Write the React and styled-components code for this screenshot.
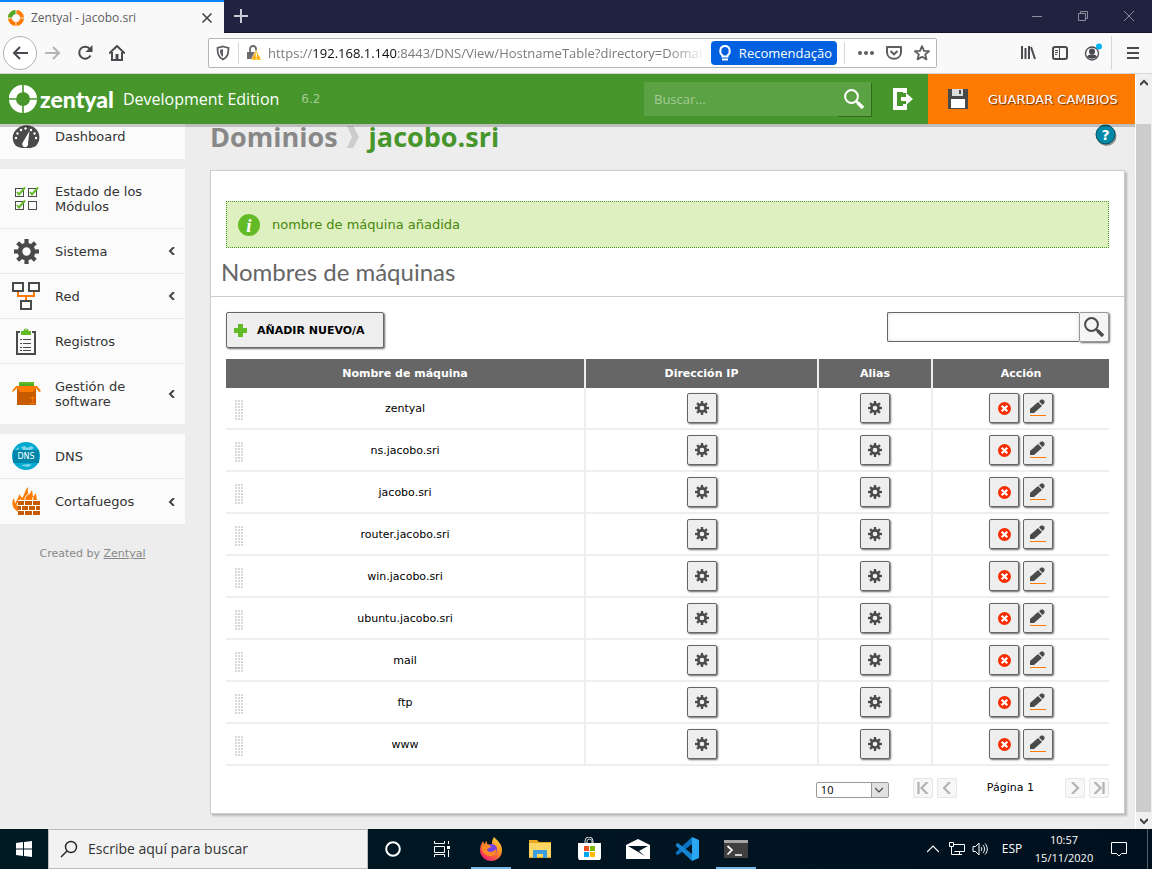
import React from "react";
import styled, { createGlobalStyle, css } from "styled-components";

const verdana = `"DejaVu Sans", Verdana, sans-serif`;
const segoe = `"Open Sans", "Segoe UI", sans-serif`;

const GlobalStyle = createGlobalStyle`
  *, *::before, *::after { box-sizing: border-box; }
  body { margin: 0; font-family: ${verdana}; color: #000; }
  button, input, select { font: inherit; color: inherit; margin: 0; }
  button { padding: 0; border: 0; background: none; cursor: pointer; }
  svg { display: block; flex: none; }
`;

const Desktop = styled.div`
  display: flex;
  flex-direction: column;
  min-height: 100vh;
  background: #ededed;
`;

/* Browser chrome */

const TabStrip = styled.div`
  display: flex;
  height: 33px;
  background: #20233f;
  border-bottom: 1px solid #14162c;
  font-family: ${segoe};
`;

const Tab = styled.div`
  display: flex;
  align-items: center;
  gap: 7px;
  width: 224px;
  height: 33px;
  padding: 0 10px 0 8px;
  background: #f9f9fa;
  border-top: 2px solid #0a84ff;
  font-size: 12px;
  color: #5c5c61;
`;

const TabTitle = styled.span`
  flex: 1;
  white-space: nowrap;
`;

const StripButton = styled.button`
  display: grid;
  place-items: center;
  width: ${(p) => p.$width || 34}px;
`;

const Spacer = styled.div`
  flex: 1;
`;

const NavBar = styled.div`
  display: flex;
  align-items: center;
  height: 41px;
  background: #f9f9fa;
  border-bottom: 1px solid #d6d6d8;
  font-family: ${segoe};
`;

const NavButtons = styled.nav`
  display: flex;
  align-items: center;
  width: 208px;
  padding-left: 3px;
`;

const NavButton = styled.button`
  display: grid;
  place-items: center;
  width: 32px;
  height: 32px;
`;

const BackButton = styled(NavButton)`
  width: 34px;
  height: 34px;
  border: 1px solid #b1b1b3;
  border-radius: 50%;
  background: #fff;
`;

const AddressBar = styled.div`
  display: flex;
  align-items: center;
  flex: 1;
  min-width: 0;
  height: 30px;
  padding-left: 6px;
  background: #fff;
  border: 1px solid #b5b5b7;
  border-radius: 2px;
`;

const Divider = styled.span`
  width: 1px;
  height: 22px;
  margin: 0 7px;
  background: #d7d7db;
`;

const ToolDivider = styled(Divider)`
  height: 34px;
  margin: 0 5px 0 3px;
`;

const Url = styled.div`
  flex: 1;
  min-width: 0;
  margin-left: 6px;
  overflow: hidden;
  white-space: nowrap;
  font-size: 13px;
  line-height: 20px;
  color: #7b7b7d;
  mask-image: linear-gradient(to left, transparent 0, #000 40px);

  b {
    font-weight: 400;
    color: #0c0c0d;
  }
`;

const Recommendation = styled.button`
  display: flex;
  align-items: center;
  gap: 5px;
  height: 24px;
  margin-left: 4px;
  padding: 0 5px;
  border-radius: 4px;
  background: #0060df;
  color: #fff;
  font-size: 13px;
`;

const BarIcon = styled.button`
  display: grid;
  place-items: center;
  width: 28px;
  height: 28px;
`;

const BrowserTools = styled.div`
  display: flex;
  align-items: center;
  justify-content: flex-end;
  width: 215px;
  padding-right: 3px;
`;

/* Web page */

const Viewport = styled.div`
  display: flex;
  flex: 1;
`;

const Page = styled.div`
  display: flex;
  flex: 1;
  flex-direction: column;
  min-width: 0;
`;

const Header = styled.header`
  position: relative;
  z-index: 1;
  display: flex;
  align-items: center;
  height: 50px;
  padding-left: 9px;
  background: #46962b;
  box-shadow: 0 3px 0 rgba(0, 0, 0, 0.2);
  color: #fff;
`;

const Brand = styled.a`
  display: flex;
  align-items: center;
  gap: 3px;
  color: #fff;
  text-decoration: none;
  font: 900 23px/28px Lato, sans-serif;
`;

const Edition = styled.span`
  margin-left: 9px;
  font: 16px/24px ${segoe};
`;

const Version = styled.span`
  margin-left: 22px;
  font-size: 12px;
  color: #a3cb95;
`;

const HeaderSearch = styled.form`
  display: flex;
  width: 227px;
  height: 34px;
  background: #5ba245;

  input {
    flex: 1;
    min-width: 0;
    padding: 0 10px;
    border: 0;
    background: none;
    font: 13px ${segoe};
    outline: 0;
  }
  input::placeholder {
    color: #a3cb95;
    opacity: 1;
  }
  button {
    display: grid;
    place-items: center;
    width: 34px;
    box-shadow: 1px 1px 0 #2f6a1b;
  }
`;

const Logout = styled.button`
  display: grid;
  place-items: center;
  width: 57px;
  height: 50px;
  padding-left: 6px;
`;

const SaveButton = styled.button`
  display: flex;
  align-items: center;
  gap: 20px;
  width: 207px;
  height: 50px;
  padding-left: 20px;
  background: #ff7a00;
  font-size: 13px;
  text-transform: uppercase;
  white-space: nowrap;
  text-shadow: 1px 1px 1px rgba(0, 0, 0, 0.6);
`;

const Scroller = styled.div`
  display: flex;
  flex: 1;
  background: #ededed;
`;

const Sidebar = styled.aside`
  flex: none;
  width: 185px;
  margin-top: -10px;
`;

const Menu = styled.ul`
  margin: 0 0 10px;
  padding: 0;
  list-style: none;
  background: #fbfbfb;
`;

const MenuItem = styled.li`
  display: grid;
  min-height: ${(p) => (p.$tall ? 60 : 45)}px;

  &:not(:last-child) {
    border-bottom: 1px solid #e8e8e8;
  }
`;

const MenuLink = styled.a`
  display: grid;
  grid-template-columns: 30px 1fr 8px;
  align-items: center;
  column-gap: 14px;
  padding: 0 9px 0 11px;
  color: #333;
  font-size: 13px;
  line-height: 15px;
  text-decoration: none;
`;

const MenuIcon = styled.span`
  display: grid;
  place-items: center;
`;

const Credits = styled.p`
  margin: 22px 0 0;
  text-align: center;
  font-size: 11px;
  line-height: 16px;
  color: #888;

  a {
    color: inherit;
  }
`;

const Main = styled.main`
  flex: 1;
  min-width: 0;
  padding: 0 10px 15px 25px;
`;

const TitleRow = styled.div`
  display: flex;
  align-items: flex-start;
  justify-content: space-between;
  height: 26px;
  margin-bottom: 20px;
  padding-right: 8px;
`;

const Title = styled.h1`
  display: flex;
  align-items: center;
  gap: 8px;
  margin: 0;
  font: 700 27px/26px ${segoe};
  color: #46962b;

  a {
    color: #888;
    text-decoration: none;
  }
`;

const Panel = styled.section`
  padding: 30px 15px 15px;
  background: #fff;
  border: 1px solid #ccc;
  box-shadow: 2px 2px 2px rgba(0, 0, 0, 0.22);
`;

const Notice = styled.div`
  display: flex;
  align-items: center;
  gap: 12px;
  height: 47px;
  padding: 0 11px;
  background: #dff0c0;
  border: 1px dotted #46962b;
  color: #46870c;
  font-size: 13px;
`;

const SectionTitle = styled.h2`
  margin: 0 -15px 15px;
  padding: 8px 10px 8px;
  border-bottom: 1px solid #ccc;
  font: 400 24px/32px Lato, sans-serif;
  color: #666;
`;

const Toolbar = styled.div`
  display: flex;
  justify-content: space-between;
  align-items: flex-start;
  margin-bottom: 11px;
`;

const raised = css`
  border: 1px solid #666;
  border-radius: 2px;
  background: #eee;
  box-shadow: 1px 1px 2px rgba(0, 0, 0, 0.6);
`;

const AddButton = styled.button`
  ${raised}
  display: flex;
  align-items: center;
  gap: 10px;
  height: 36px;
  padding: 0 18px 0 7px;
  font-size: 11px;
  font-weight: 700;
  text-transform: uppercase;
`;

const TableSearch = styled.form`
  display: flex;

  input {
    width: 192px;
    height: 30px;
    padding: 0 6px;
    border: 1px solid #666;
    border-right: 0;
    border-radius: 2px 0 0 2px;
    background: #fff;
    box-shadow: inset 0 0 4px rgba(0, 0, 0, 0.12);
    font-size: 13px;
  }
  button {
    ${raised}
    display: grid;
    place-items: center;
    width: 30px;
    height: 30px;
    border-color: #999;
    background: #f5f5f5;
  }
`;

const HostTable = styled.table`
  width: 100%;
  table-layout: fixed;
  border-collapse: separate;
  border-spacing: 0;
  font-size: 11px;
  text-align: center;

  th {
    height: 29px;
    padding: 0;
    background: #666;
    color: #fff;
    font-weight: 700;
  }
  td {
    height: 42px;
    padding: 0;
    border-bottom: 2px solid #eee;
  }
  th:not(:last-child),
  td:not(:last-child) {
    border-right: 2px solid #eee;
  }
`;

const AddressColumn = styled.col`
  width: 233px;
`;
const AliasColumn = styled.col`
  width: 114px;
`;
const ActionColumn = styled.col`
  width: 176px;
`;

const HostName = styled.div`
  display: grid;
  grid-template-columns: 24px 1fr 24px;
  align-items: center;
`;

const Grip = styled.span`
  width: 9px;
  height: 21px;
  margin: 3px 0 0 9px;
  background:
    repeating-linear-gradient(#fff 0 1px, transparent 1px 3px),
    repeating-linear-gradient(90deg, #d8d8d8 0 2px, #fff 2px 3px);
`;

const Actions = styled.div`
  display: flex;
  justify-content: center;
  gap: 4px;
`;

const IconButton = styled.button`
  ${raised}
  display: grid;
  place-items: center;
  width: 30px;
  height: 30px;
`;

const Pager = styled.div`
  display: flex;
  justify-content: flex-end;
  align-items: center;
  gap: 4px;
  margin-top: 12px;
  font-size: 11px;
`;

const PageSize = styled.label`
  display: grid;
  grid-template-columns: 1fr 18px;
  align-self: flex-end;
  width: 73px;
  height: 16px;
  margin-right: 20px;
  border: 1px solid #999;
  border-radius: 2px;
  background: linear-gradient(90deg, #fff 54px, #999 54px 55px, #e1e1e1 55px);

  select {
    grid-area: 1 / 1 / 2 / 3;
    padding: 0 4px;
    border: 0;
    background: none;
    appearance: none;
    font: 11px/14px ${segoe};
  }
  svg {
    grid-area: 1 / 2;
    place-self: center;
    pointer-events: none;
  }
`;

const PageButton = styled.button`
  display: grid;
  place-items: center;
  width: 20px;
  height: 20px;
  background: #f7f7f7;
  border: 1px solid #e6e6e6;
  border-radius: 2px;
`;

const PageLabel = styled.span`
  padding: 0 27px 2px 26px;
`;

const ScrollBar = styled.div`
  display: flex;
  flex-direction: column;
  width: 17px;
  background: #f0f0f0;
  border-left: 1px solid #fff;
`;

const ScrollArrow = styled.button`
  display: grid;
  place-items: center;
  height: 17px;
`;

const ScrollThumb = styled.div`
  flex: 1;
  margin: 33px 1px 0 0;
  background: #cdcdcd;
`;

/* Windows taskbar */

const TaskBar = styled.footer`
  display: flex;
  height: 40px;
  background: linear-gradient(90deg, #001a24, #00101f);
  color: #fff;
  font: 12px/18px ${segoe};
`;

const TaskButton = styled.button`
  display: grid;
  place-items: center;
  width: ${(p) => p.$width || 49}px;
  ${(p) =>
    p.$open &&
    css`
      background: linear-gradient(#76b9ed, #76b9ed) center bottom / 40px 2px no-repeat;
    `}
`;

const TaskSearch = styled.label`
  display: flex;
  align-items: center;
  gap: 10px;
  width: 320px;
  padding: 0 11px;
  background: #f2f2f2;
  border: 1px solid #bcbcbc;

  input {
    flex: 1;
    min-width: 0;
    padding: 0;
    border: 0;
    background: none;
    font-size: 14px;
  }
  input::placeholder {
    color: #333;
    opacity: 1;
  }
`;

const Clock = styled.button`
  width: 66px;
  text-align: center;
  font-size: 11px;
  line-height: 18px;
`;

const Notifications = styled(TaskButton)`
  padding-right: 6px;
`;

const ShowDesktop = styled.button`
  width: 5px;
  border-left: 1px solid #53606a;
`;

/* Drawings */

const Svg = ({ w = 16, h = w, box, children, ...rest }) => (
  <svg width={w} height={h} viewBox={box || `0 0 ${w} ${h}`} fill="none" aria-hidden="true" {...rest}>
    {children}
  </svg>
);

const Ring = ({ size, color = "#fff", accent = color, gap = "#46962b" }) => (
  <Svg w={size} box="0 0 28 28">
    <circle cx="14" cy="14" r="10.5" stroke={color} strokeWidth="7" />
    <path d="M3.5 14A10.5 10.5 0 0 1 14 3.5" stroke={accent} strokeWidth="7" />
    <path d="M14 0v8M14 20v8M0 14h8M20 14h8" stroke={gap} strokeWidth="1.6" />
  </Svg>
);

const Gear = ({ size, hole = 4 }) => (
  <Svg w={size} box="0 0 24 24">
    <circle cx="12" cy="12" r={(hole + 8.5) / 2} stroke="#4a4a49" strokeWidth={8.5 - hole} />
    {[0, 45, 90, 135, 180, 225, 270, 315].map((a) => (
      <rect key={a} x="10" y="0" width="4" height="5" fill="#4a4a49" transform={`rotate(${a} 12 12)`} />
    ))}
  </Svg>
);

const Lens = ({ size, color }) => (
  <Svg w={size} box="0 0 20 20">
    <circle cx="7.5" cy="7.5" r="6.4" stroke={color} strokeWidth="2" />
    <path d="M12 12l2 2" stroke={color} strokeWidth="2" />
    <path d="M13.500 13.500l5.500 5.500" stroke={color} strokeWidth="3.4" />
  </Svg>
);

const Chevron = ({ d, w = 8, h = 8, color = "#444", width = 2 }) => (
  <Svg w={w} h={h} box="0 0 8 8">
    <path d={d} stroke={color} strokeWidth={width} />
  </Svg>
);

const DashboardIcon = () => (
  <Svg w={28} h={24}>
    <path d="M4 21C-1 15 0 8 5 4c5-5 14-5 19 0 4 4 5 11 0 17-2 1-4 1.500-5 2h-9c-2-.5-4-1-6-2z" fill="#4a4a49" />
    {[[4, 13], [5.500, 8.500], [9, 5], [13.500, 3.500], [22.500, 8.500], [24, 13], [19, 5]].map(([x, y]) => (
      <circle key={x} cx={x} cy={y} r="1.200" fill="#fff" />
    ))}
    <path d="M17.500 6l-1.500 12a3 3 0 1 1-5-1z" fill="#fff" />
  </Svg>
);

const ModulesIcon = () => (
  <Svg w={26} h={25}>
    {[[2, 2], [15, 2], [2, 15], [15, 15]].map(([x, y], i) => (
      <g key={i}>
        <rect x={x + 0.5} y={y + 0.5} width="8" height="8" stroke="#4a4a49" />
        {i < 3 && <path d={`M${x + 2} ${y + 4}l2 2.5 6-7`} stroke="#62bb26" strokeWidth="2" />}
      </g>
    ))}
  </Svg>
);

const NetworkIcon = () => (
  <Svg w={28} h={28}>
    <path d="M6 9v5h16V9M14 14v5" stroke="#ff7a00" strokeWidth="2" />
    <path d="M1 1h10v8H1zM17 1h10v8H17zM9 19h10v8H9z" stroke="#4a4a49" strokeWidth="2" />
  </Svg>
);

const LogsIcon = () => (
  <Svg w={22} h={28}>
    <path d="M5 5H2v22h18V5h-3" stroke="#4a4a49" strokeWidth="2" />
    <path d="M6 8V4h2.500a2.500 2.500 0 0 1 5 0H16v4z" fill="#62bb26" />
    <path d="M10.500 2h1v1h-1z" fill="#fff" />
    <path d="M5 12.500h2M5 16.500h2M5 20.500h2M5 23.500h2M8 12.500h8M8 16.500h8M8 20.500h8M8 23.500h8" stroke="#4a4a49" />
  </Svg>
);

const SoftwareIcon = () => (
  <Svg w={30} h={26}>
    <path d="M8 1h15v6H8z" fill="#62bb26" />
    <path d="M8 3h15v4H8z" fill="#4faa2a" />
    <path d="M6 7h19v17H6z" fill="#c75b00" />
    <path d="M5 5h21l4 5-2 1-3-4-3 4H9L6 7l-4 4-1-1z" fill="#ff7a00" />
    <path d="M21.500 21v-5M19 18l2.500-2.500 2.500 2.500M19 22.500h5" stroke="#ff7a00" />
  </Svg>
);

const DnsIcon = () => (
  <Svg w={28}>
    <circle cx="14" cy="14" r="14" fill="#00a9cf" />
    <path d="M9 5l4-1 2 2 4-2 3 2-5 3-6-1zM9 23l8-1 3 1-4 2-5-1zM3 8l4-3-1 4z" fill="#7dd5ea" />
    <path d="M1 8h26v13H1z" fill="#0086a8" />
    <text x="14" y="17" textAnchor="middle" fill="#fff" fontSize="8" fontWeight="400" fontFamily="DejaVu Sans, sans-serif">DNS</text>
  </Svg>
);

const FirewallIcon = () => (
  <Svg w={30} h={31}>
    <path d="M7 26C1 22 0 16 3 12l1 6c1-4 4-5 4-10l3 4c3-3 2-7 6-11 0 3-1 5 1 8l3-5 1 7 3-4c0 4 2 7 0 11z" fill="#ff7a00" />
    <path d="M10 13c-2 3-4 4-4 7M17 8c-3 3-4 5-3 8M22 11l-1 5" stroke="#fff" />
    <path d="M7 14h22v16H7z" fill="#fff" />
    {[15, 20, 25].map((y, i) => (
      <path key={y} d={i % 2 ? `M7 ${y}h3v4H7zM11 ${y}h6v4h-6zM18 ${y}h6v4h-6zM25 ${y}h4v4h-4z` : `M7 ${y}h6v4H7zM14 ${y}h7v4h-7zM22 ${y}h7v4h-7z`} fill="#c75b00" />
    ))}
  </Svg>
);

const InfoIcon = () => (
  <Svg w={22}>
    <circle cx="11" cy="11" r="11" fill="#62bb26" />
    <text x="11" y="18" textAnchor="middle" fill="#fff" fontSize="19" fontWeight="700" fontStyle="italic" fontFamily="Liberation Serif, serif">i</text>
  </Svg>
);

const HelpIcon = () => (
  <Svg w={22}>
    <circle cx="11.500" cy="12" r="10" fill="#000" opacity=".4" />
    <circle cx="10.500" cy="10.500" r="9.500" fill="#0089a7" stroke="#04505f" />
    <text x="10.500" y="15.500" textAnchor="middle" fill="#fff" fontSize="14" fontWeight="700" fontFamily="DejaVu Sans, sans-serif">?</text>
  </Svg>
);

const DeleteIcon = () => (
  <Svg w={14}>
    <circle cx="7.500" cy="7.500" r="6.500" fill="#fa2c00" />
    <path d="M4.700 4.700l5.600 5.600M10.300 4.700l-5.600 5.600" stroke="#fff" strokeWidth="2.200" />
  </Svg>
);

const EditIcon = () => (
  <Svg w={18}>
    <path d="M1 14v-4l8-7 4 4-8 7z" fill="#4a4a49" />
    <path d="M10 2.300L12 .5h2l1.500 1.500v2L13.500 6z" fill="#4a4a49" />
    <path d="M1 16.500h16" stroke="#ff7a00" />
  </Svg>
);

const FirefoxIcon = () => (
  <Svg w={24}>
    <defs>
      <linearGradient id="fox" x1="1" y1="0" x2="0.300" y2="1">
        <stop offset="0" stopColor="#ffe24a" />
        <stop offset=".45" stopColor="#ff9422" />
        <stop offset="1" stopColor="#f5206a" />
      </linearGradient>
    </defs>
    <path d="M15 0c3 3 8 7 8 13 0 7-5 11-11 11S1 19 1 13c0-3 1-6 3-9l1 3 3-3v3l5 1c0-3 0-5 2-8z" fill="url(#fox)" />
    <circle cx="12.500" cy="12.500" r="5.500" fill="#7542e5" />
    <path d="M3 9c4-3 7-1 10 1-3 0-3 2-5 2 0 4 6 4 9 0 1 5-3 8-7 7-5-1-8-5-7-10z" fill="#ff8a25" />
  </Svg>
);

const ExplorerIcon = () => (
  <Svg w={22} h={20}>
    <path d="M0 1h8l2 2h12v16H0z" fill="#e9a820" />
    <path d="M0 4h22v14H0z" fill="#ffd766" />
    <path d="M4 19v-8h14v8h-4v-4H8v4z" fill="#3c9ee0" />
  </Svg>
);

const StoreIcon = () => (
  <Svg w={24}>
    <path d="M8 6V4a4 4 0 0 1 8 0v2M10 6V3.500a3 3 0 0 1 5 0V6" stroke="#ddd" />
    <path d="M1 6h23v15l-1 2H2l-1-2z" fill="#fff" />
    <path d="M7 9h5v5H7z" fill="#f25022" />
    <path d="M13 9h5v5h-5z" fill="#7fba00" />
    <path d="M7 15h5v5H7z" fill="#00a4ef" />
    <path d="M13 15h5v5h-5z" fill="#ffb900" />
  </Svg>
);

const MailIcon = () => (
  <Svg w={24} h={20}>
    <path d="M0 6l12-6 12 6v14H0z" fill="#fff" />
    <path d="M2 7h20l-9 5 6 5L2 7z" fill="#001523" />
  </Svg>
);

const CodeIcon = () => (
  <Svg w={24}>
    <path d="M17 0l7 3v18l-7 3z" fill="#2aa7f2" />
    <path d="M1 15L17 0v7L3 18l-2-1z" fill="#0a72c0" />
    <path d="M1 7l2-1 14 11v7L1 9z" fill="#1685d2" />
  </Svg>
);

const TerminalIcon = () => (
  <Svg w={24} h={18}>
    <path d="M0 0h24v18H0z" fill="#3f3f3f" />
    <path d="M0 0h24v3H0z" fill="#a5a5a5" />
    <path d="M3.500 6l4.500 4-4.500 4.500M11 15h7" stroke="#fff" strokeWidth="1.700" />
  </Svg>
);

const menus = [
  [{ label: "Dashboard", icon: <DashboardIcon /> }],
  [
    { label: "Estado de los Módulos", icon: <ModulesIcon />, tall: true },
    { label: "Sistema", icon: <Gear size={25} />, nested: true },
    { label: "Red", icon: <NetworkIcon />, nested: true },
    { label: "Registros", icon: <LogsIcon /> },
    { label: "Gestión de software", icon: <SoftwareIcon />, nested: true, tall: true },
  ],
  [
    { label: "DNS", icon: <DnsIcon /> },
    { label: "Cortafuegos", icon: <FirewallIcon />, nested: true },
  ],
];

const hosts = [
  "zentyal",
  "ns.jacobo.sri",
  "jacobo.sri",
  "router.jacobo.sri",
  "win.jacobo.sri",
  "ubuntu.jacobo.sri",
  "mail",
  "ftp",
  "www",
];

const keep = (e) => e.preventDefault();

function BrowserChrome() {
  return (
    <>
      <TabStrip>
        <Tab>
          <Ring size={16} color="#ff7a00" accent="#4faa2a" gap="#f9f9fa" />
          <TabTitle>Zentyal - jacobo.sri</TabTitle>
          <button aria-label="Cerrar pestaña">
            <Svg w={14}><path d="M2.500 2.500l9 9M11.500 2.500l-9 9" stroke="#3f3f44" strokeWidth="1.500" /></Svg>
          </button>
        </Tab>
        <StripButton aria-label="Nueva pestaña">
          <Svg w={14}><path d="M7 0v14M0 7h14" stroke="#c9cad4" strokeWidth="2" /></Svg>
        </StripButton>
        <Spacer />
        <StripButton $width={46} aria-label="Minimizar">
          <Svg w={10}><path d="M0 5.500h10" stroke="#8c8e9e" /></Svg>
        </StripButton>
        <StripButton $width={46} aria-label="Restaurar">
          <Svg w={10}><path d="M.5 2.500h7v7h-7zM2.500 2.500v-2h7v7h-2" stroke="#8c8e9e" /></Svg>
        </StripButton>
        <StripButton $width={46} aria-label="Cerrar">
          <Svg w={10}><path d="M0 0l10 10M10 0L0 10" stroke="#8c8e9e" /></Svg>
        </StripButton>
      </TabStrip>
      <NavBar>
        <NavButtons aria-label="Navegación">
          <BackButton aria-label="Atrás">
            <Svg w={16}><path d="M16 8H2M8 2L2 8l6 6" stroke="#4a4a4f" strokeWidth="2" /></Svg>
          </BackButton>
          <NavButton aria-label="Adelante">
            <Svg w={16}><path d="M0 8h14M8 2l6 6-6 6" stroke="#b5b5b7" strokeWidth="2" /></Svg>
          </NavButton>
          <NavButton aria-label="Recargar">
            <Svg w={16}>
              <path d="M13 4A6 6 0 1 0 13.500 10.500" stroke="#4a4a4f" strokeWidth="2" />
              <path d="M15.500 0v7H8.500z" fill="#4a4a4f" />
            </Svg>
          </NavButton>
          <NavButton aria-label="Inicio">
            <Svg w={16}>
              <path d="M0 8.500L8 1l8 7.500M3 7v8h10V7" stroke="#4a4a4f" strokeWidth="2" />
              <path d="M6.500 9h3v6h-3z" fill="#4a4a4f" />
            </Svg>
          </NavButton>
        </NavButtons>
        <AddressBar>
          <Svg w={16}>
            <path d="M8 1.500l5.500 1.500c0 6-1 9-5.500 11.500C3.500 12 2.500 9 2.500 3z" stroke="#5d5d62" strokeWidth="1.800" />
            <path d="M8 4l-3 1c0 4 1 5.500 3 7z" fill="#5d5d62" />
          </Svg>
          <Divider />
          <Svg w={16}>
            <path d="M4 7V4a3 3 0 0 1 6 0V7" stroke="#6a6a6e" strokeWidth="1.800" />
            <path d="M1 7h10v7H1z" fill="#6a6a6e" />
            <path d="M10 5l5.500 10H5z" fill="#ffb000" stroke="#fff" strokeWidth=".6" />
            <path d="M10.300 8v4M10.300 13v1" stroke="#fff" strokeWidth="1.200" />
          </Svg>
          <Url>
            https://<b>192.168.1.140</b>:8443/DNS/View/HostnameTable?directory=Domai
          </Url>
          <Recommendation>
            <Svg w={18}>
              <path d="M6.500 11.500C3 9 3.500 2 9 2s6 7 2.500 9.500v1h-5z" stroke="#fff" strokeWidth="2" />
              <path d="M6 15.500h6" stroke="#fff" strokeWidth="2" />
            </Svg>
            Recomendação
          </Recommendation>
          <Divider />
          <BarIcon aria-label="Acciones">
            <Svg w={16}>
              <circle cx="2" cy="8" r="2" fill="#5d5d62" />
              <circle cx="8" cy="8" r="2" fill="#5d5d62" />
              <circle cx="14" cy="8" r="2" fill="#5d5d62" />
            </Svg>
          </BarIcon>
          <BarIcon aria-label="Pocket">
            <Svg w={16}>
              <path d="M1 2h14v5c0 9-14 9-14 0z" stroke="#5d5d62" strokeWidth="2" strokeLinejoin="round" />
              <path d="M4.500 6L8 9.300 11.500 6" stroke="#5d5d62" strokeWidth="2" />
            </Svg>
          </BarIcon>
          <BarIcon aria-label="Marcador">
            <Svg w={16}>
              <path d="M8 1.200l2 4.600 5 .4-3.800 3.200 1.300 5L8 11.800l-4.500 2.600 1.300-5L1 6.200l5-.4z" stroke="#5d5d62" strokeWidth="1.800" strokeLinejoin="round" />
            </Svg>
          </BarIcon>
        </AddressBar>
        <BrowserTools>
          <NavButton aria-label="Biblioteca">
            <Svg w={16}><path d="M2 1v13M5.500 3v11M9 1v13M11 2l4 12" stroke="#4a4a4f" strokeWidth="2" /></Svg>
          </NavButton>
          <NavButton aria-label="Barra lateral">
            <Svg w={16}>
              <rect x="1" y="2" width="14" height="12" rx="2" stroke="#4a4a4f" strokeWidth="2" />
              <path d="M7.500 2v12M3 5.500h3M3 7.500h3M3 9.500h2" stroke="#4a4a4f" />
            </Svg>
          </NavButton>
          <NavButton aria-label="Cuenta">
            <Svg w={20}>
              <circle cx="10" cy="10.500" r="6.500" stroke="#4a4a4f" strokeWidth="1.300" />
              <circle cx="10" cy="8.500" r="3" fill="#4a4a4f" />
              <path d="M5 13.500c2-3 8-3 10 0-2 3-8 3-10 0z" fill="#4a4a4f" />
              <circle cx="17" cy="3.500" r="3" fill="#00b3f4" />
            </Svg>
          </NavButton>
          <ToolDivider />
          <NavButton aria-label="Menú">
            <Svg w={12} h={14}><path d="M0 2h12M0 7h12M0 12h12" stroke="#4a4a4f" strokeWidth="2" /></Svg>
          </NavButton>
        </BrowserTools>
      </NavBar>
    </>
  );
}

function PageHeader() {
  return (
    <Header>
      <Brand href="#inicio">
        <Ring size={28} />
        zentyal
      </Brand>
      <Edition>Development Edition</Edition>
      <Version>6.2</Version>
      <Spacer />
      <HeaderSearch onSubmit={keep}>
        <input type="text" placeholder="Buscar..." aria-label="Buscar" />
        <button aria-label="Buscar"><Lens size={20} color="#fff" /></button>
      </HeaderSearch>
      <Logout aria-label="Cerrar sesión">
        <Svg w={22}>
          <path d="M13 5V2H3v18h10v-4" stroke="#fff" strokeWidth="4" />
          <path d="M9 9h5V5l7 6-7 6v-4H9z" fill="#fff" />
        </Svg>
      </Logout>
      <SaveButton>
        <Svg w={20}>
          <path d="M0 0h20v20H0z" fill="#4a4a49" />
          <path d="M4 0h11v7H4z" fill="#ddd" />
          <path d="M11 1h2v4h-2z" fill="#4a4a49" />
          <path d="M3 10h14v9H3z" fill="#fff" />
        </Svg>
        Guardar cambios
      </SaveButton>
    </Header>
  );
}

function SideMenu() {
  return (
    <Sidebar>
      {menus.map((items, i) => (
        <Menu key={i}>
          {items.map((item) => (
            <MenuItem key={item.label} $tall={item.tall}>
              <MenuLink href="#menu">
                <MenuIcon>{item.icon}</MenuIcon>
                {item.label}
                {item.nested && <Chevron d="M6 0L2 4l4 4" />}
              </MenuLink>
            </MenuItem>
          ))}
        </Menu>
      ))}
      <Credits>
        Created by <a href="#zentyal">Zentyal</a>
      </Credits>
    </Sidebar>
  );
}

function Hosts() {
  return (
    <HostTable>
      <colgroup>
        <col />
        <AddressColumn />
        <AliasColumn />
        <ActionColumn />
      </colgroup>
      <thead>
        <tr>
          <th scope="col">Nombre de máquina</th>
          <th scope="col">Dirección IP</th>
          <th scope="col">Alias</th>
          <th scope="col">Acción</th>
        </tr>
      </thead>
      <tbody>
        {hosts.map((host) => (
          <tr key={host}>
            <td>
              <HostName>
                <Grip />
                {host}
              </HostName>
            </td>
            <td>
              <Actions>
                <IconButton aria-label={`Dirección IP de ${host}`}><Gear size={14} /></IconButton>
              </Actions>
            </td>
            <td>
              <Actions>
                <IconButton aria-label={`Alias de ${host}`}><Gear size={14} /></IconButton>
              </Actions>
            </td>
            <td>
              <Actions>
                <IconButton aria-label={`Eliminar ${host}`}><DeleteIcon /></IconButton>
                <IconButton aria-label={`Editar ${host}`}><EditIcon /></IconButton>
              </Actions>
            </td>
          </tr>
        ))}
      </tbody>
    </HostTable>
  );
}

function PagerBar() {
  const arrow = (label, d) => (
    <PageButton aria-label={label}>
      <Chevron w={12} h={12} d={d} color="#b3b3b3" width={1.5} />
    </PageButton>
  );
  return (
    <Pager>
      <PageSize>
        <select defaultValue="10" aria-label="Filas por página">
          <option>10</option>
          <option>20</option>
          <option>50</option>
        </select>
        <Chevron d="M0 2l4 4 4-4" width={1.2} />
      </PageSize>
      {arrow("Primera", "M1 0v8M7 0L3 4l4 4")}
      {arrow("Anterior", "M6 0L2 4l4 4")}
      <PageLabel>Página 1</PageLabel>
      {arrow("Siguiente", "M2 0l4 4-4 4")}
      {arrow("Última", "M7 0v8M1 0l4 4-4 4")}
    </Pager>
  );
}

function WindowsBar() {
  return (
    <TaskBar>
      <TaskButton $width={48} aria-label="Inicio de Windows">
        <Svg w={16}><path d="M0 2l7-1v6.500H0zM8 1l8-1v7.500H8zM0 8.500h7V15l-7-1zM8 8.500h8V16l-8-1z" fill="#fff" /></Svg>
      </TaskButton>
      <TaskSearch>
        <Svg w={18}>
          <circle cx="11" cy="7" r="5.500" stroke="#222" strokeWidth="1.400" />
          <path d="M7 11l-6 6" stroke="#222" strokeWidth="1.400" />
        </Svg>
        <input type="text" placeholder="Escribe aquí para buscar" aria-label="Escribe aquí para buscar" />
      </TaskSearch>
      <TaskButton aria-label="Cortana">
        <Svg w={16}><circle cx="8" cy="8" r="6.800" stroke="#fff" strokeWidth="2" /></Svg>
      </TaskButton>
      <TaskButton aria-label="Vista de tareas">
        <Svg w={16}><path d="M.5 0v2.500h10V0M.5 5.500h10v6H.5zM.5 16v-2.500h10V16M14.500 0v3M14.500 9v7" stroke="#fff" /><path d="M13 5h3v3h-3z" fill="#fff" /></Svg>
      </TaskButton>
      <TaskButton $open aria-label="Firefox"><FirefoxIcon /></TaskButton>
      <TaskButton aria-label="Explorador"><ExplorerIcon /></TaskButton>
      <TaskButton aria-label="Tienda"><StoreIcon /></TaskButton>
      <TaskButton aria-label="Correo"><MailIcon /></TaskButton>
      <TaskButton aria-label="Editor"><CodeIcon /></TaskButton>
      <TaskButton $open aria-label="Terminal"><TerminalIcon /></TaskButton>
      <Spacer />
      <TaskButton $width={24} aria-label="Iconos ocultos">
        <Svg w={12} h={8}><path d="M0 7l6-6 6 6" stroke="#fff" strokeWidth="1.200" /></Svg>
      </TaskButton>
      <TaskButton $width={24} aria-label="Red">
        <Svg w={16}><path d="M5 3.500h10.500v7H5.500M.5 1.500h4v4h-4zM2.500 5.500v8H8M10.500 10.500v3M7 13.500h6" stroke="#fff" /></Svg>
      </TaskButton>
      <TaskButton $width={24} aria-label="Volumen">
        <Svg w={18} h={16}><path d="M1 5.500h2.500L7 2v12l-3.500-3.500H1zM9 6c1 1 1 3 0 4M11 4c2 2 2 6 0 8M13 2.500c3 3 3 8 0 11" stroke="#fff" /></Svg>
      </TaskButton>
      <TaskButton $width={38}>ESP</TaskButton>
      <Clock>
        10:57
        <br />
        15/11/2020
      </Clock>
      <Notifications $width={50} aria-label="Notificaciones">
        <Svg w={16}><path d="M.5 1.500h15v11h-5L8 15l-2.500-2.500h-5z" stroke="#fff" /></Svg>
      </Notifications>
      <ShowDesktop aria-label="Mostrar escritorio" />
    </TaskBar>
  );
}

export default function App() {
  return (
    <Desktop>
      <GlobalStyle />
      <BrowserChrome />
      <Viewport>
        <Page>
          <PageHeader />
          <Scroller>
            <SideMenu />
            <Main>
              <TitleRow>
                <Title>
                  <a href="#dominios">Dominios</a>
                  <Svg w={15} h={22} box="-1 0 15 22"><path d="M0 0h6l6 11-6 11H0l5-11z" fill="#ccc" /></Svg>
                  <span>jacobo.sri</span>
                </Title>
                <button aria-label="Ayuda"><HelpIcon /></button>
              </TitleRow>
              <Panel>
                <Notice role="status">
                  <InfoIcon />
                  nombre de máquina añadida
                </Notice>
                <SectionTitle>Nombres de máquinas</SectionTitle>
                <Toolbar>
                  <AddButton>
                    <Svg w={13}><path d="M4 0h5v4h4v5H9v4H4V9H0V4h4z" fill="#62bb26" /></Svg>
                    Añadir nuevo/a
                  </AddButton>
                  <TableSearch onSubmit={keep}>
                    <input type="text" aria-label="Filtrar nombres" />
                    <button aria-label="Filtrar"><Lens size={20} color="#4a4a49" /></button>
                  </TableSearch>
                </Toolbar>
                <Hosts />
                <PagerBar />
              </Panel>
            </Main>
          </Scroller>
        </Page>
        <ScrollBar>
          <ScrollArrow aria-label="Subir"><Chevron d="M0 6l4-4 4 4" /></ScrollArrow>
          <ScrollThumb />
          <ScrollArrow aria-label="Bajar"><Chevron d="M0 2l4 4 4-4" /></ScrollArrow>
        </ScrollBar>
      </Viewport>
      <WindowsBar />
    </Desktop>
  );
}
